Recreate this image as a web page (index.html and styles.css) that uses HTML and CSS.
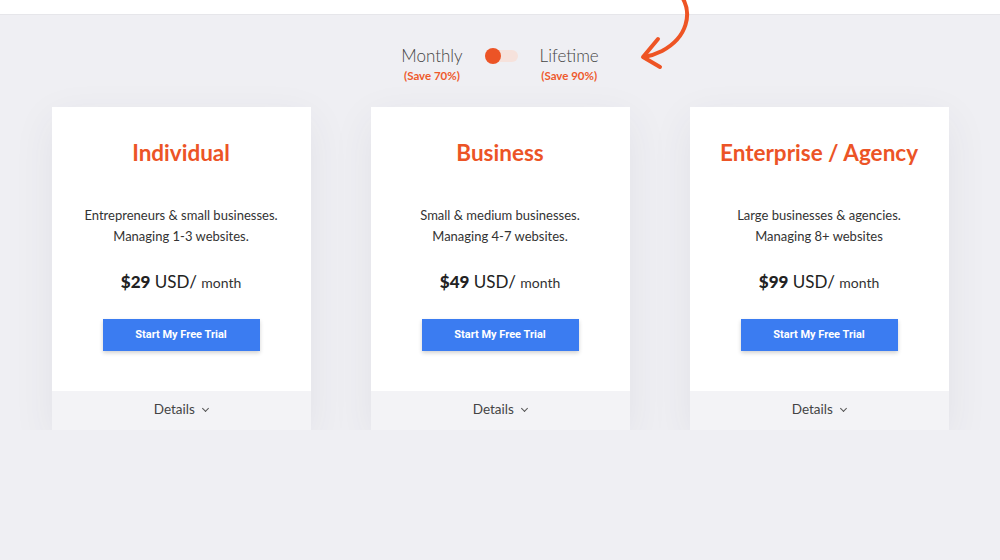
FILE: index.html
```html
<!DOCTYPE html>
<html lang="en">
<head>
<meta charset="utf-8">
<title>Pricing</title>
<link rel="stylesheet" href="styles.css">
</head>
<body>
<div class="topbar"></div>

<div class="switcher">
  <div class="plan-opt">
    <span class="opt-name">Monthly</span>
    <span class="opt-save">(Save 70%)</span>
  </div>
  <div class="toggle"><span class="knob"></span></div>
  <div class="plan-opt">
    <span class="opt-name">Lifetime</span>
    <span class="opt-save">(Save 90%)</span>
  </div>
  <svg class="arrow" width="60" height="76" viewBox="0 0 60 76">
    <path d="M44 2 C54 18 50 42 24 56 C18 59 12 61 6 62" fill="none" stroke="#ee5424" stroke-width="4" stroke-linecap="round"/>
    <path d="M20 44 L5 62 L22 72" fill="none" stroke="#ee5424" stroke-width="4" stroke-linecap="round" stroke-linejoin="round"/>
  </svg>
</div>

<div class="plans">
  <div class="card">
    <div class="card-main">
      <h2 class="card-title">Individual</h2>
      <p class="card-desc">Entrepreneurs &amp; small businesses.<br>Managing 1-3 websites.</p>
      <p class="card-price"><b>$29</b> USD/ <small>month</small></p>
      <a class="trial-btn" href="#">Start My Free Trial</a>
    </div>
    <div class="card-foot">Details <span class="chev"></span></div>
  </div>

  <div class="card">
    <div class="card-main">
      <h2 class="card-title">Business</h2>
      <p class="card-desc">Small &amp; medium businesses.<br>Managing 4-7 websites.</p>
      <p class="card-price"><b>$49</b> USD/ <small>month</small></p>
      <a class="trial-btn" href="#">Start My Free Trial</a>
    </div>
    <div class="card-foot">Details <span class="chev"></span></div>
  </div>

  <div class="card">
    <div class="card-main">
      <h2 class="card-title">Enterprise / Agency</h2>
      <p class="card-desc">Large businesses &amp; agencies.<br>Managing 8+ websites</p>
      <p class="card-price"><b>$99</b> USD/ <small>month</small></p>
      <a class="trial-btn" href="#">Start My Free Trial</a>
    </div>
    <div class="card-foot">Details <span class="chev"></span></div>
  </div>
</div>
</body>
</html>
```

FILE: styles.css
```css
body { margin: 0; background: #efeff3; font-family: "Lato", "Open Sans", sans-serif; color: #333; }

.topbar { height: 14px; background: #fff; border-bottom: 1px solid #e6e6ea; }

/* monthly / lifetime switch */
.switcher { position: relative; display: flex; justify-content: center; align-items: flex-start;
            gap: 22px; padding-top: 30px; height: 62px; box-sizing: border-box; width: 200px; margin: 0 auto; }
.plan-opt { display: flex; flex-direction: column; align-items: center; }
.opt-name { font-size: 17px; font-weight: 300; color: #444; line-height: 22px; white-space: nowrap; }
.opt-save { font-size: 11.5px; font-weight: 700; color: #ee5a2c; margin-top: 2px; white-space: nowrap; }
.toggle { width: 33px; height: 12px; border-radius: 6px; background: #f6e2dc; margin-top: 5px; position: relative; flex: none; }
.knob { position: absolute; left: 0; top: -2px; width: 16px; height: 16px; border-radius: 50%; background: #ec5426; }
.arrow { position: absolute; left: 238px; top: -20px; }

/* cards */
.plans { display: flex; justify-content: center; gap: 60px; margin-top: 30px; }
.card { width: 259px; box-shadow: 0 12px 40px rgba(60, 60, 90, 0.07); }
.card-main { background: #fff; text-align: center; padding: 34px 0 40px; }
.card-title { margin: 0; font-size: 22.5px; line-height: 24px; font-weight: 700; color: #ec5426; }
.card-desc { margin: 40px 0 0; font-size: 13px; line-height: 21px; font-weight: 400; color: #333; }
.card-price { margin: 23px 0 0; font-size: 17px; line-height: 24px; color: #222; }
.card-price b { font-weight: 900; }
.card-price small { font-size: 14px; color: #333; }
.trial-btn { display: block; width: 157px; height: 32px; line-height: 32px; margin: 24px auto 0;
             background: #3b7cf1; color: #fff; text-decoration: none; font-family: Roboto, sans-serif;
             font-size: 11px; font-weight: 700; box-shadow: 0 2px 4px rgba(0, 0, 0, 0.18); }
.card-foot { height: 39px; line-height: 37px; background: #f3f3f6; text-align: center; font-size: 13.5px; color: #444; }
.chev { display: inline-block; width: 4px; height: 4px; border-right: 1px solid #555; border-bottom: 1px solid #555;
        transform: rotate(45deg); margin-left: 5px; vertical-align: 3px; }
```
